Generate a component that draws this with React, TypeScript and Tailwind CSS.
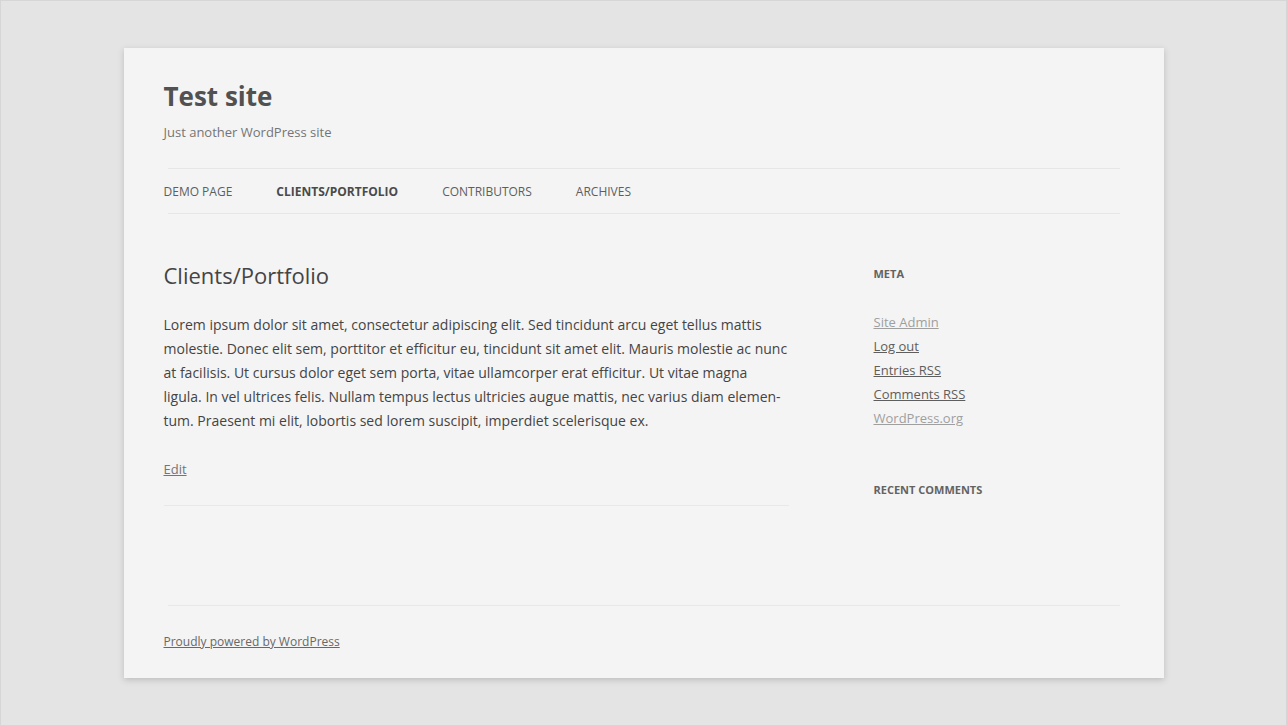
const navItems = [
  { label: 'Demo Page', active: false },
  { label: 'Clients/Portfolio', active: true },
  { label: 'Contributors', active: false },
  { label: 'Archives', active: false },
]

const metaLinks = [
  { label: 'Site Admin', visited: true },
  { label: 'Log out', visited: false },
  { label: 'Entries RSS', visited: false },
  { label: 'Comments RSS', visited: false },
  { label: 'WordPress.org', visited: true },
]

export default function App() {
  return (
    <div
      className="h-[726px] overflow-hidden border border-[#d6d6d6] bg-[#e4e4e4] pt-[47px] text-[#444]"
      style={{ fontFamily: '"Open Sans", "Noto Sans", Arial, sans-serif' }}
    >
      <div className="mx-auto w-[1040px] bg-[#f4f4f4] px-10 shadow-[0_2px_6px_rgba(100,100,100,0.3)]">
        {/* Header */}
        <header className="pt-[30px]">
          <h1 className="text-[26px] font-bold leading-[36px] text-[#515151]">Test site</h1>
          <p className="mt-[6px] text-[13px] leading-[24px] text-[#757575]">Just another WordPress site</p>

          <nav className="mx-1 mt-[24px] border-y border-[#e6e6e6] pt-px">
            <div className="-ml-1 flex">
              {navItems.map((item) => (
                <a
                  key={item.label}
                  className={
                    item.active
                      ? 'mr-[44px] text-[12px] font-bold uppercase leading-[43px] text-[#4a4a4a]'
                      : 'mr-[44px] text-[12px] uppercase leading-[43px] text-[#5e5e5e]'
                  }
                >
                  {item.label}
                </a>
              ))}
            </div>
          </nav>
        </header>

        {/* Main */}
        <div className="mt-[48px] flex justify-between">
          <article className="w-[625px]">
            <h2 className="text-[22px] leading-[26px] text-[#444]">Clients/Portfolio</h2>
            <p className="mt-[25px] text-[14px] leading-[24px] text-[#444]">
              Lorem ipsum dolor sit amet, consectetur adipiscing elit. Sed tincidunt arcu eget tellus mattis
              molestie. Donec elit sem, porttitor et efficitur eu, tincidunt sit amet elit. Mauris molestie ac nunc
              at facilisis. Ut cursus dolor eget sem porta, vitae ullamcorper erat efficitur. Ut vitae magna
              ligula. In vel ultrices felis. Nullam tempus lectus ultricies augue mattis, nec varius diam elemen-
              tum. Praesent mi elit, lobortis sed lorem suscipit, imperdiet scelerisque ex.
            </p>
            <div className="mt-[23px] border-b border-[#e8e8e8] pb-[24px]">
              <a className="text-[13px] leading-[24px] text-[#757575] underline">Edit</a>
            </div>
          </article>

          <aside className="w-[250px]">
            <h3 className="pt-px text-[11px] font-bold uppercase leading-[22px] text-[#636363]">Meta</h3>
            <ul className="mt-[25px] text-[13px] leading-[24px]">
              {metaLinks.map((l) => (
                <li key={l.label}>
                  <a className={l.visited ? 'text-[#9f9f9f] underline' : 'text-[#5e5e5e] underline'}>{l.label}</a>
                </li>
              ))}
            </ul>
            <h3 className="mt-[49px] text-[11px] font-bold uppercase leading-[22px] text-[#636363]">
              Recent Comments
            </h3>
          </aside>
        </div>

        {/* Footer */}
        <footer className="mx-1 mt-[99px] border-t border-[#e8e8e8] pb-[24px] pt-[22px]">
          <a className="-ml-1 text-[12px] leading-[24px] text-[#686868] underline">Proudly powered by WordPress</a>
        </footer>
      </div>
    </div>
  )
}
